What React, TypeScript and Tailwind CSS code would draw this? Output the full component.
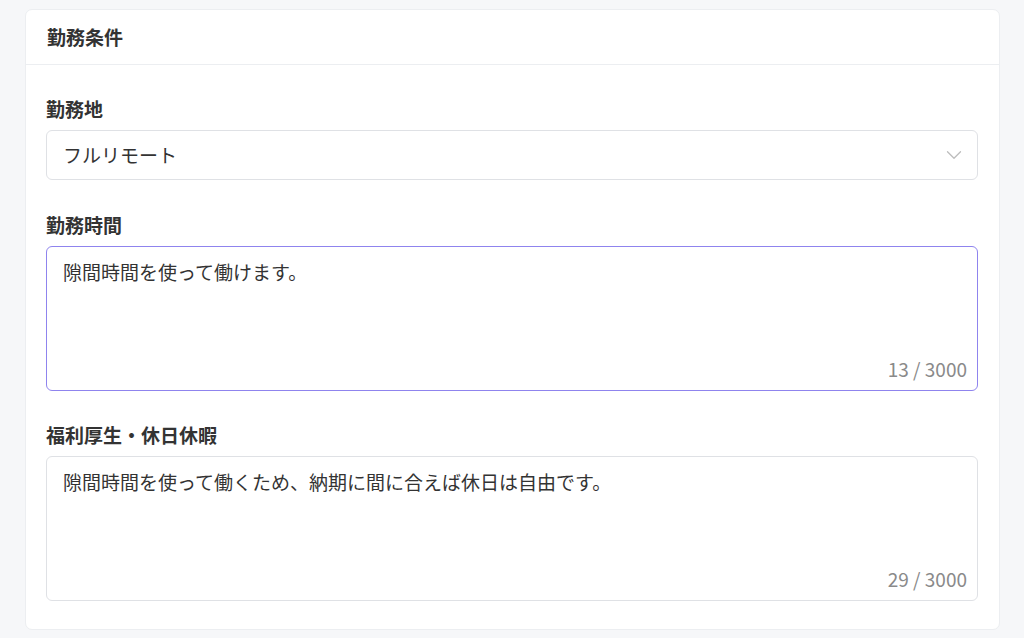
import React, { useState } from 'react';
import { ChevronDown } from 'lucide-react';

const font = { fontFamily: '"Noto Sans CJK JP", "Noto Sans", sans-serif' };

function TextField({ label, value, focused }: { label: string; value: string; focused?: boolean }) {
  const [text, setText] = useState(value);
  return (
    <div>
      <label className="block text-[19px] leading-[28px] font-bold text-[#333] mb-[7px]">{label}</label>
      <div
        className={`flex flex-col h-[145px] rounded-[6px] border bg-white ${
          focused ? 'border-[#8f84ee]' : 'border-[#dfe1e5]'
        }`}
      >
        <textarea
          className="flex-1 resize-none outline-none bg-transparent px-4 pt-[11px] text-[19px] leading-[28px] text-[#333]"
          value={text}
          onChange={(e) => setText(e.target.value)}
        />
        <div className="text-right pr-[10px] pb-[9px] text-[19px] leading-[24px] text-[#8a8a8a]">
          {text.length} / 3000
        </div>
      </div>
    </div>
  );
}

export default function App() {
  return (
    <div className="min-h-screen bg-[#f6f7f9] pt-[9px] pl-[25px] pr-[24px] pb-[9px]" style={font}>
      <div className="bg-white border border-[#eceef1] rounded-[7px]">
        <div className="h-[55px] flex items-center px-[21px] border-b border-[#eceef1]">
          <h2 className="text-[19px] font-bold text-[#333]">勤務条件</h2>
        </div>

        <div className="pl-[20px] pr-[21px] pt-[30px] pb-[28px] flex flex-col gap-[31px]">
          <div>
            <label className="block text-[19px] leading-[28px] font-bold text-[#333] mb-[7px]">勤務地</label>
            <div className="h-[50px] flex items-center justify-between rounded-[6px] border border-[#dfe1e5] pl-4 pr-[10px]">
              <span className="text-[19px] text-[#333]">フルリモート</span>
              <ChevronDown size={26} strokeWidth={1.2} className="text-[#bdbdbd]" />
            </div>
          </div>

          <TextField label="勤務時間" value="隙間時間を使って働けます。" focused />
          <div className="-mt-px">
            <TextField label="福利厚生・休日休暇" value="隙間時間を使って働くため、納期に間に合えば休日は自由です。" />
          </div>
        </div>
      </div>
    </div>
  );
}
